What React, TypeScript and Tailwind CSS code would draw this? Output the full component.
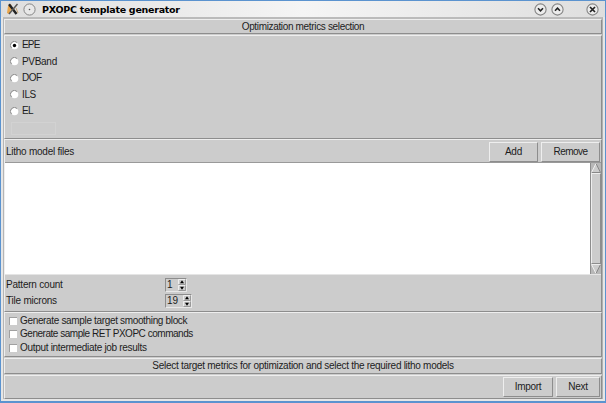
import React from "react";

const raised = "border border-t-[#eeeeee] border-l-[#eeeeee] border-r-[#8d8d8d] border-b-[#8d8d8d]";

function Radio({ label, checked, tracking }: { label: string; checked?: boolean; tracking: string }) {
  return (
    <div className="flex h-[16.5px] items-center">
      <svg width="9" height="9" viewBox="0 0 9 9" className="mr-[3px] shrink-0">
        <circle cx="4.5" cy="4.5" r="3.8" fill="#fff" />
        <path d="M1.6 7.2A3.8 3.8 0 0 1 7.2 1.6" fill="none" stroke="#8a8a8a" strokeWidth="1" />
        {checked && <circle cx="4.5" cy="4.5" r="1.7" fill="#000" />}
      </svg>
      <span className={tracking}>{label}</span>
    </div>
  );
}

function Check({ label, tracking }: { label: string; tracking: string }) {
  return (
    <div className="flex h-[13.5px] items-center">
      <span className="mr-[3px] size-[8px] shrink-0 border-t border-l border-[#a0a0a0] bg-white" />
      <span className={tracking}>{label}</span>
    </div>
  );
}

function Button({ label, width, tracking }: { label: string; width: string; tracking: string }) {
  return (
    <button className={`flex h-[20px] items-center justify-center bg-[#cccccc] ${raised} ${width}`}>
      <span className={tracking}>{label}</span>
    </button>
  );
}

function Spin({ label, value, width }: { label: string; value: string; width: string }) {
  return (
    <div className="flex h-[16px] items-center">
      <span className="w-[159px] tracking-[-0.22px]">{label}</span>
      <div className={`flex h-[14px] items-center border border-t-[#8d8d8d] border-l-[#8d8d8d] border-r-[#e8e8e8] border-b-[#e8e8e8] pl-px ${width}`}>
        <span className="flex-1">{value}</span>
        <svg width="8" height="12" viewBox="0 0 8 12">
          <path d="M.5 5.5V.5H7.5M.5 11.5V6.5H7.5" stroke="#eee" fill="none" />
          <path d="M7.5 .5V5.5H.5M7.5 6.5V11.5H.5" stroke="#999" fill="none" />
          <path d="M4 1.2L6 4.2H2ZM4 10.8L6 7.8H2Z" fill="#000" />
        </svg>
      </div>
    </div>
  );
}

function WindowButton({ d, strong }: { d: string; strong?: boolean }) {
  return (
    <svg width="13" height="13" viewBox="0 0 13 13">
      <circle cx="6.5" cy="6.5" r="5.6" fill="#ececec" stroke="#858585" strokeWidth="1.1" />
      <path d={d} fill="none" stroke="#222" strokeWidth={strong ? 1.7 : 1.6} />
    </svg>
  );
}

export default function App() {
  return (
    <div className="flex h-[403px] w-[606px] flex-col overflow-hidden border-x border-t border-b-2 border-[#5b93cf] bg-[#e6e6e6] font-['Liberation_Sans',Arial,sans-serif] text-[10px] leading-[12px] whitespace-nowrap text-[#1c1c1c]">
      <header className="flex h-[16px] shrink-0 items-center bg-linear-to-r from-[#dedede] via-[#f5f5f5] to-[#dedede] pr-[5px] pl-[6px]">
        <svg width="12" height="12" viewBox="0 0 12 12">
          <path d="M1 3L4 1L5 5L2 11L0 10Z" fill="#e9a54b" />
          <path d="M2 1.2L9.5 11" stroke="#222" strokeWidth="2.4" />
          <path d="M10.5 1L2 11" stroke="#5b5955" strokeWidth="1.5" />
          <path d="M9 5L11 10" stroke="#c5a272" strokeWidth="1" />
        </svg>
        <svg width="13" height="13" viewBox="0 0 13 13" className="ml-[4px]">
          <circle cx="6.5" cy="6.5" r="5.6" fill="#e8e8e8" stroke="#858585" />
          <circle cx="6.5" cy="6.5" r=".8" fill="#555" />
        </svg>
        <h1 className="ml-[6px] flex-1 pt-px font-['DejaVu_Sans',sans-serif] text-[9.5px] font-bold tracking-[-0.27px] text-black">
          PXOPC template generator
        </h1>
        <div className="flex items-center pr-px">
          <WindowButton d="M4 5.3L6.5 7.8L9 5.3" />
          <span className="w-[4px]" />
          <WindowButton d="M4 7.7L6.5 5.2L9 7.7" />
          <span className="w-[22px]" />
          <WindowButton d="M4 4L9 9M9 4L4 9" strong />
        </div>
      </header>
      <main className="mr-[2px] ml-[2px] flex h-[382px] flex-col border-t-2 border-r border-l border-t-[#bbbbbb] border-r-[#b0b0b0] border-l-[#b5b5b5] bg-[#cccccc]">
        <section className={`flex h-[15px] shrink-0 items-center justify-center ${raised}`}>
          <span className="tracking-[-0.34px]">Optimization metrics selection</span>
        </section>
        <section className={`mt-px h-[104px] shrink-0 pt-px pl-[5px] ${raised}`}>
          <Radio label="EPE" checked tracking="tracking-[-0.8px]" />
          <Radio label="PVBand" tracking="tracking-[-0.3px]" />
          <Radio label="DOF" tracking="tracking-[-0.5px]" />
          <Radio label="ILS" tracking="tracking-[-0.4px]" />
          <Radio label="EL" tracking="tracking-[-0.7px]" />
          <div className="mt-[2px] ml-px h-[13px] w-[45px] border border-[#d2d2d2]" />
        </section>
        <section className={`h-[173px] shrink-0 ${raised}`}>
          <div className="flex h-[22px] items-center">
            <span className="flex-1 pt-px pl-px tracking-[-0.25px]">Litho model files</span>
            <div className="mt-px flex gap-[3px] pr-px">
              <Button label="Add" width="w-[49px]" tracking="tracking-[-0.2px]" />
              <Button label="Remove" width="w-[59px]" tracking="tracking-[-0.55px]" />
            </div>
          </div>
          <div className="flex h-[113px] border-t border-b border-t-[#999999] border-b-[#e5e5e5] bg-white">
            <div className="flex-1" />
            <div className="flex w-[11px] flex-col border-l border-[#8d8d8d] bg-[#b8b8b8]">
              <svg width="10" height="10" viewBox="0 0 10 10">
                <path d="M5 .5L9.5 9.5H.5Z" fill="#ccc" />
                <path d="M5 .5L9.5 9.5H.5" fill="none" stroke="#888" />
                <path d="M.5 9.5L5 .5" stroke="#eee" />
              </svg>
              <div className={`flex-1 bg-[#cccccc] ${raised}`} />
              <svg width="10" height="10" viewBox="0 0 10 10">
                <path d="M.5 .5H9.5L5 9.5Z" fill="#ccc" />
                <path d="M9.5 .5L5 9.5" stroke="#888" />
                <path d="M9.5 .5H.5L5 9.5" fill="none" stroke="#eee" />
              </svg>
            </div>
          </div>
          <div className="pt-[2px] pl-px">
            <Spin label="Pattern count" value="1" width="w-[22px]" />
            <Spin label="Tile microns" value="19" width="w-[27px]" />
          </div>
        </section>
        <section className={`h-[45px] shrink-0 pt-px pl-[4px] ${raised}`}>
          <Check label="Generate sample target smoothing block" tracking="tracking-[-0.34px]" />
          <Check label="Generate sample RET PXOPC commands" tracking="tracking-[-0.47px]" />
          <Check label="Output intermediate job results" tracking="tracking-[-0.31px]" />
        </section>
        <section className={`mt-px flex h-[16px] shrink-0 items-center justify-center ${raised}`}>
          <span className="tracking-[-0.28px]">Select target metrics for optimization and select the required litho models</span>
        </section>
        <section className={`mt-px flex h-[24px] shrink-0 items-center justify-end gap-[3px] pr-px ${raised}`}>
          <Button label="Import" width="w-[50px]" tracking="tracking-[-0.3px]" />
          <Button label="Next" width="w-[44px]" tracking="tracking-[-0.3px]" />
        </section>
      </main>
    </div>
  );
}
